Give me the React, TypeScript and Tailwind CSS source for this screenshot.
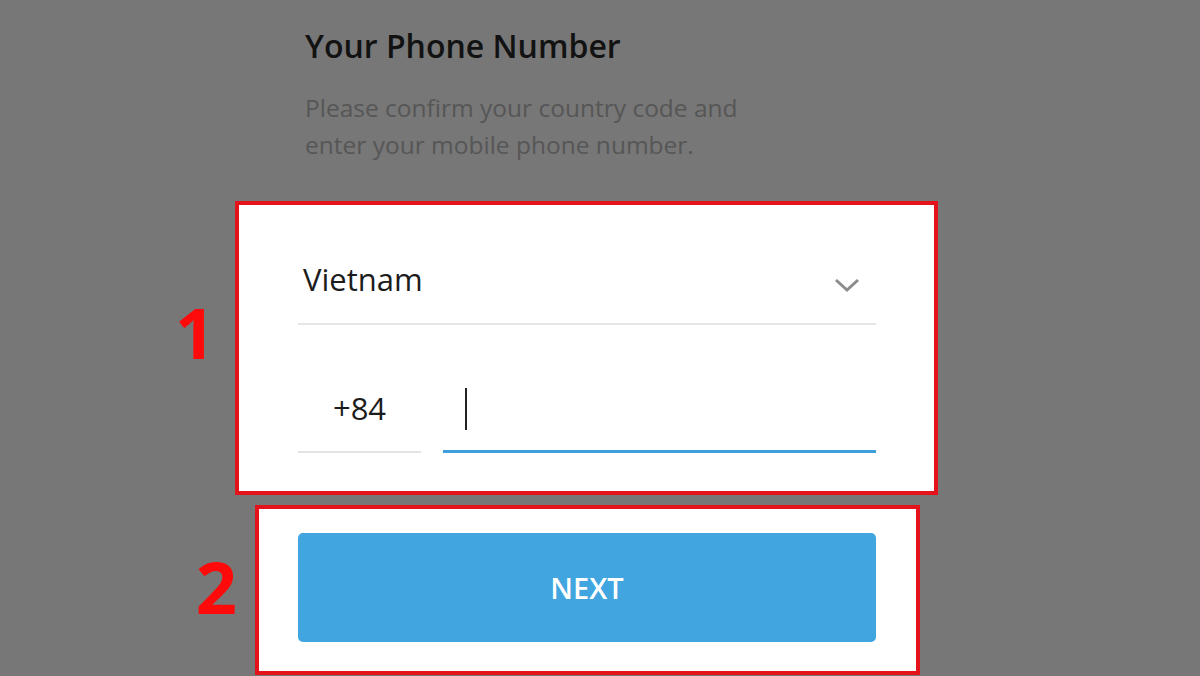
export default function App() {
  return (
    <div
      className="w-[1200px] h-[676px] overflow-hidden bg-[#777777]"
      style={{ fontFamily: '"Open Sans", "Noto Sans", sans-serif' }}
    >
      <div className="pl-[305px] pt-[24px]">
        <h1 className="text-[32px] leading-[44px] font-semibold text-[#121212]">Your Phone Number</h1>
        <p className="mt-[21px] text-[24.5px] leading-[37px] text-[#565656]">
          Please confirm your country code and
          <br />
          enter your mobile phone number.
        </p>
      </div>

      <div className="flex mt-[38px]">
        <div className="w-[235px] pr-[20px] text-right">
          <span className="block mt-[95px] text-[70px] leading-[72px] font-bold text-[#ff0a0a]">1</span>
        </div>
        <div className="w-[703px] h-[294px] border-4 border-[#e4131b] bg-white pl-[59px] pr-[58px] pt-[54px]">
          <div className="flex items-center justify-between pb-[24px] border-b-2 border-[#e6e6e6]">
            <span className="pl-[5px] text-[31px] leading-[40px] text-[#1c1c1c]">Vietnam</span>
            <svg width="26" height="15" viewBox="0 0 26 15" className="mt-[12px] mr-[16px]">
              <polyline points="2,2 13,12 24,2" fill="none" stroke="#8c8c8c" strokeWidth="3" />
            </svg>
          </div>
          <div className="flex items-end gap-[22px] mt-[63px]">
            <div className="w-[123px] pb-[23px] border-b-2 border-[#e3e3e3] text-center text-[31px] leading-[40px] text-[#1c1c1c]">
              +84
            </div>
            <div className="flex-1 pb-[20px] border-b-[3px] border-[#3f9fdd]">
              <div className="ml-[22px] w-[2px] h-[42px] bg-[#222222]" />
            </div>
          </div>
        </div>
      </div>

      <div className="flex mt-[10px]">
        <div className="w-[255px] pr-[18px] text-right">
          <span className="block mt-[45px] text-[72px] leading-[72px] font-bold text-[#ff0a0a]">2</span>
        </div>
        <div className="w-[665px] h-[170px] border-4 border-[#e4131b] bg-white pl-[39px] pr-[40px] pt-[24px]">
          <button className="w-full h-[109px] rounded-[5px] bg-[#41a5e0] text-white text-[29px] font-semibold">
            NEXT
          </button>
        </div>
      </div>
    </div>
  );
}
